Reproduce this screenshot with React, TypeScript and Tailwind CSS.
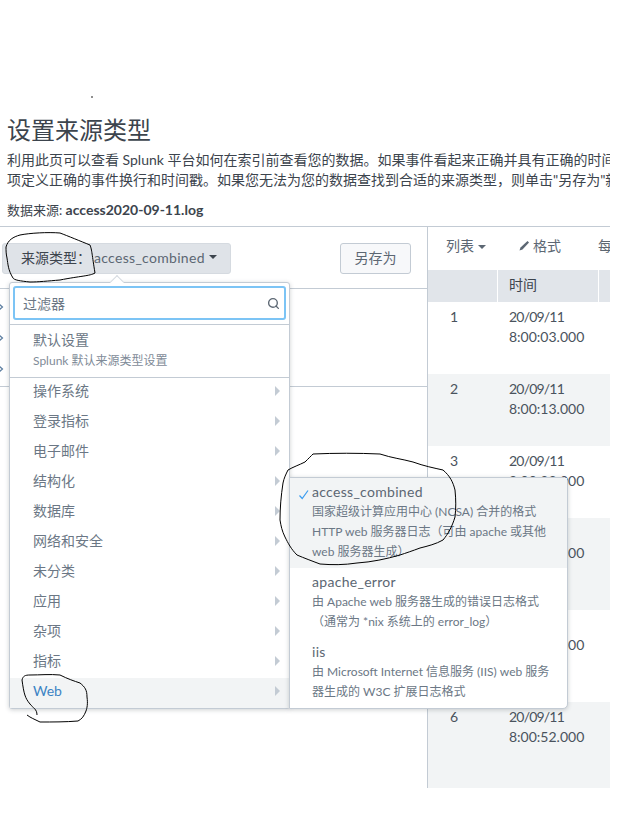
import React from 'react';
import { Search } from 'lucide-react';

const FONT = "font-['Lato','Noto_Sans_CJK_SC',sans-serif]";

const categories = ['操作系统', '登录指标', '电子邮件', '结构化', '数据库', '网络和安全', '未分类', '应用', '杂项', '指标'];

const rows = [
  { id: 1, date: '20/09/11', time: '8:00:03.000', h: 'h-[72px]', bg: 'bg-white' },
  { id: 2, date: '20/09/11', time: '8:00:13.000', h: 'h-[72px]', bg: 'bg-[#f2f4f5]' },
  { id: 3, date: '20/09/11', time: '8:00:23.000', h: 'h-[72px]', bg: 'bg-white' },
  { id: 4, date: '20/09/11', time: '8:00:33.000', h: 'h-[92px]', bg: 'bg-[#f2f4f5]' },
  { id: 5, date: '20/09/11', time: '8:00:43.000', h: 'h-[92px]', bg: 'bg-white' },
  { id: 6, date: '20/09/11', time: '8:00:52.000', h: 'h-[86px]', bg: 'bg-[#f2f4f5]' },
];

const Caret = () => <span className="ml-1 inline-block h-0 w-0 border-x-[4px] border-t-[4px] border-x-transparent border-t-current align-middle" />;

const MenuArrow = () => <span className="h-0 w-0 border-y-[5px] border-l-[5px] border-y-transparent border-l-[#c3cbd4]" />;

const SubItem = ({ title, lines, active }: { title: string; lines: string[]; active?: boolean }) => (
  <div className={`relative pl-[22px] pr-2 pt-[4px] pb-[2px] ${active ? 'bg-[#f2f4f5] pb-[6px]' : ''}`}>
    {active && (
      <svg className="absolute left-[8px] top-[11px]" width="12" height="11" viewBox="0 0 12 11" fill="none" stroke="#3c9df0" strokeWidth="1.2">
        <path d="M1.5 6.5 L4.2 9.5 L10 1.5" />
      </svg>
    )}
    <div className="text-[14px] leading-[20px] tracking-[0.3px] text-[#5c6773]">{title}</div>
    {lines.map((l) => (
      <div key={l} className="whitespace-nowrap text-[12px] leading-[20px] text-[#6b7785]">{l}</div>
    ))}
  </div>
);

const App: React.FC = () => {
  return (
    <div className={`relative h-[819px] w-[619px] overflow-hidden bg-white ${FONT}`}>
      <div className="w-[610px] overflow-hidden pt-[113px]">
        <div className="px-[7px]">
          <h1 className="text-[24px] leading-[34px] font-normal text-[#3c444d]">设置来源类型</h1>
          <p className="mt-[3px] whitespace-nowrap text-[14px] leading-[20px] text-[#3c444d]">利用此页可以查看 Splunk 平台如何在索引前查看您的数据。如果事件看起来正确并具有正确的时间戳，请单击"下一步"继续。否则，请使用下面的选</p>
          <p className="whitespace-nowrap text-[14px] leading-[20px] text-[#3c444d]">项定义正确的事件换行和时间戳。如果您无法为您的数据查找到合适的来源类型，则单击"另存为"新建来源类型。</p>
          <p className="mt-[10px] text-[13px] leading-[20px] text-[#3c444d]">数据来源: <b className="text-[14px] font-bold">access2020-09-11.log</b></p>
        </div>

        <div className="mt-[6px] flex h-[562px] border-t border-[#c3cbd4]">
          <div className="relative w-[427px] shrink-0 border-r border-[#c3cbd4] box-content">
            <div className="flex h-[62px] items-start justify-between border-b border-[#c3cbd4] pl-[2px] pr-[16px] pt-[16px]">
              <div className="flex h-[31px] w-[229px] items-center rounded-[3px] border border-[#d5dae0] bg-[#dfe3e8] pb-[3px] pl-[18px] text-[14px] text-[#3c444d]">
                <span>来源类型：</span>
                <span className="ml-[3px] tracking-[0.3px] text-[#5c6773]">access_combined</span>
                <Caret />
              </div>
              <button className="h-[31px] w-[71px] rounded-[3px] border border-[#c3cbd4] bg-[#f7f8fa] pb-[3px] text-[14px] text-[#5c6773]">另存为</button>
            </div>
            <div className="flex h-[98px] flex-col justify-around border-b border-[#c3cbd4] py-[2px] pl-0 text-[#5c6773]">
              {[0, 1, 2].map((i) => (
                <svg key={i} className="ml-[-2px]" width="6" height="8" viewBox="0 0 6 8" fill="none" stroke="#5c7ea0" strokeWidth="1.2">
                  <path d="M1 1 L4.5 4 L1 7" />
                </svg>
              ))}
            </div>

            {/* source type dropdown */}
            <div className="absolute left-[9px] top-[55px] w-[281px] rounded-[3px] border border-[#c3cbd4] bg-white shadow-[0_1px_4px_rgba(60,68,77,0.25)]">
              <span className="absolute left-[102px] top-[-6px] h-[10px] w-[10px] rotate-45 border-l border-t border-[#d5dae0] bg-white" />
              <div className="relative border-b border-[#c3cbd4] px-[3px] pb-[4px] pt-[3px]">
                <div className="flex h-[34px] items-center justify-between rounded-[3px] border-2 border-[#7cc4f5] bg-white pl-[8px] pr-[4px] text-[14px] text-[#6b7785]">
                  <span>过滤器</span>
                  <Search size={13} strokeWidth={2.5} className="text-[#5c6773]" />
                </div>
              </div>
              <div className="border-b border-[#c3cbd4] pb-[6px] pl-[23px] pt-[5px]">
                <div className="text-[14px] leading-[20px] text-[#6b7785]">默认设置</div>
                <div className="mt-[1px] text-[12px] leading-[20px] text-[#7f8b98]">Splunk 默认来源类型设置</div>
              </div>
              {categories.map((c) => (
                <div key={c} className="flex h-[30px] items-center justify-between pb-[5px] pl-[23px] pr-[9px] text-[14px] text-[#6b7785]">
                  <span>{c}</span>
                  <MenuArrow />
                </div>
              ))}
              <div className="flex h-[30px] items-center justify-between bg-[#f2f4f5] pb-[5px] pl-[23px] pr-[9px] text-[14px] text-[#3b83c4]">
                <span>Web</span>
                <MenuArrow />
              </div>

              {/* web submenu */}
              <div className="absolute bottom-[-1px] left-[279px] w-[279px] rounded-r-[5px] border border-[#c3cbd4] bg-white pb-[4px] shadow-[0_1px_4px_rgba(60,68,77,0.25)]">
                <SubItem active title="access_combined" lines={['国家超级计算应用中心 (NCSA) 合并的格式', 'HTTP web 服务器日志（可由 apache 或其他', 'web 服务器生成）']} />
                <SubItem title="apache_error" lines={['由 Apache web 服务器生成的错误日志格式', '（通常为 *nix 系统上的 error_log）']} />
                <div className="h-[4px]" />
                <SubItem title="iis" lines={['由 Microsoft Internet 信息服务 (IIS) web 服务', '器生成的 W3C 扩展日志格式']} />
              </div>
            </div>
          </div>

          <div className="min-w-0 flex-1">
            <div className="flex h-[43px] items-center whitespace-nowrap pb-[6px] pl-[18px] text-[14px] text-[#5c6773]">
              <span className="shrink-0">列表<Caret /></span>
              <svg className="ml-[33px] mr-[3px] shrink-0" width="11" height="11" viewBox="0 0 11 11" fill="#5c6773">
                <path d="M0.5 10.5 L1.5 7.5 L8.5 1 L10 2.5 L3.5 9.5 Z" />
              </svg>
              <span className="shrink-0">格式</span>
              <span className="ml-[37px] shrink-0">每页 20 个</span>
            </div>
            <div className="flex h-[32px] bg-[#e1e5ea] text-[14px] text-[#3c444d]">
              <div className="w-[70px] border-r border-white" />
              <div className="flex w-[101px] items-center border-r border-white pb-[4px] pl-[11px]">时间</div>
              <div className="flex-1" />
            </div>
            {rows.map((r) => (
              <div key={r.id} className={`flex ${r.h} ${r.bg} pt-[5px] text-[14px] leading-[20px] text-[#4a535d]`}>
                <div className="w-[70px] pl-[22px]">{r.id}</div>
                <div className="pl-[11px]">
                  <div className="tracking-[-0.8px]">{r.date}</div>
                  <div>{r.time}</div>
                </div>
              </div>
            ))}
          </div>
        </div>
      </div>

      {/* hand drawn pen marks on the screenshot */}
      <svg className="pointer-events-none absolute left-0 top-0" width="619" height="819" fill="none" stroke="#000" strokeWidth="1">
        <path d="M6 247 C8 240 13 237 20 235 C30 233 48 232 60 233 C68 236 80 241 90 245 C92 250 92 255 95 273 C90 276 80 276 60 280 C48 281 38 282 30 282 C20 281 14 280 13 278 C8 270 8 264 7 258 C6 254 6 250 6 247 Z" />
        <path d="M37 715 C37 709 33 708 30 704 C25 698 24 694 22 680 C23 676 25 675 30 675 C40 675 50 674 60 675 C68 679 74 681 80 683 C85 687 87 690 87 697 C88 704 87 708 86 711 C84 716 82 719 78 721 C66 722 52 722 40 722 C34 719 31 718 27 715" />
        <path d="M305 462 C309 458 311 456 313 454 C335 453 358 453 380 454 C392 458 402 459 413 462 C424 466 434 468 443 470 C450 476 453 482 455 490 C456 500 456 508 455 517 C452 527 448 534 443 540 C436 544 428 546 420 548 C412 551 406 553 400 555 C386 559 372 562 357 563 C344 565 332 565 320 564 C312 561 304 558 297 555 C291 549 288 543 285 537 C282 531 281 526 280 520 C280 508 281 496 283 483 C284 478 286 474 288 470 C293 467 299 465 305 462" />
        <circle cx="92" cy="97" r="0.8" fill="#000" stroke="none" />
      </svg>
    </div>
  );
};

export default App;
